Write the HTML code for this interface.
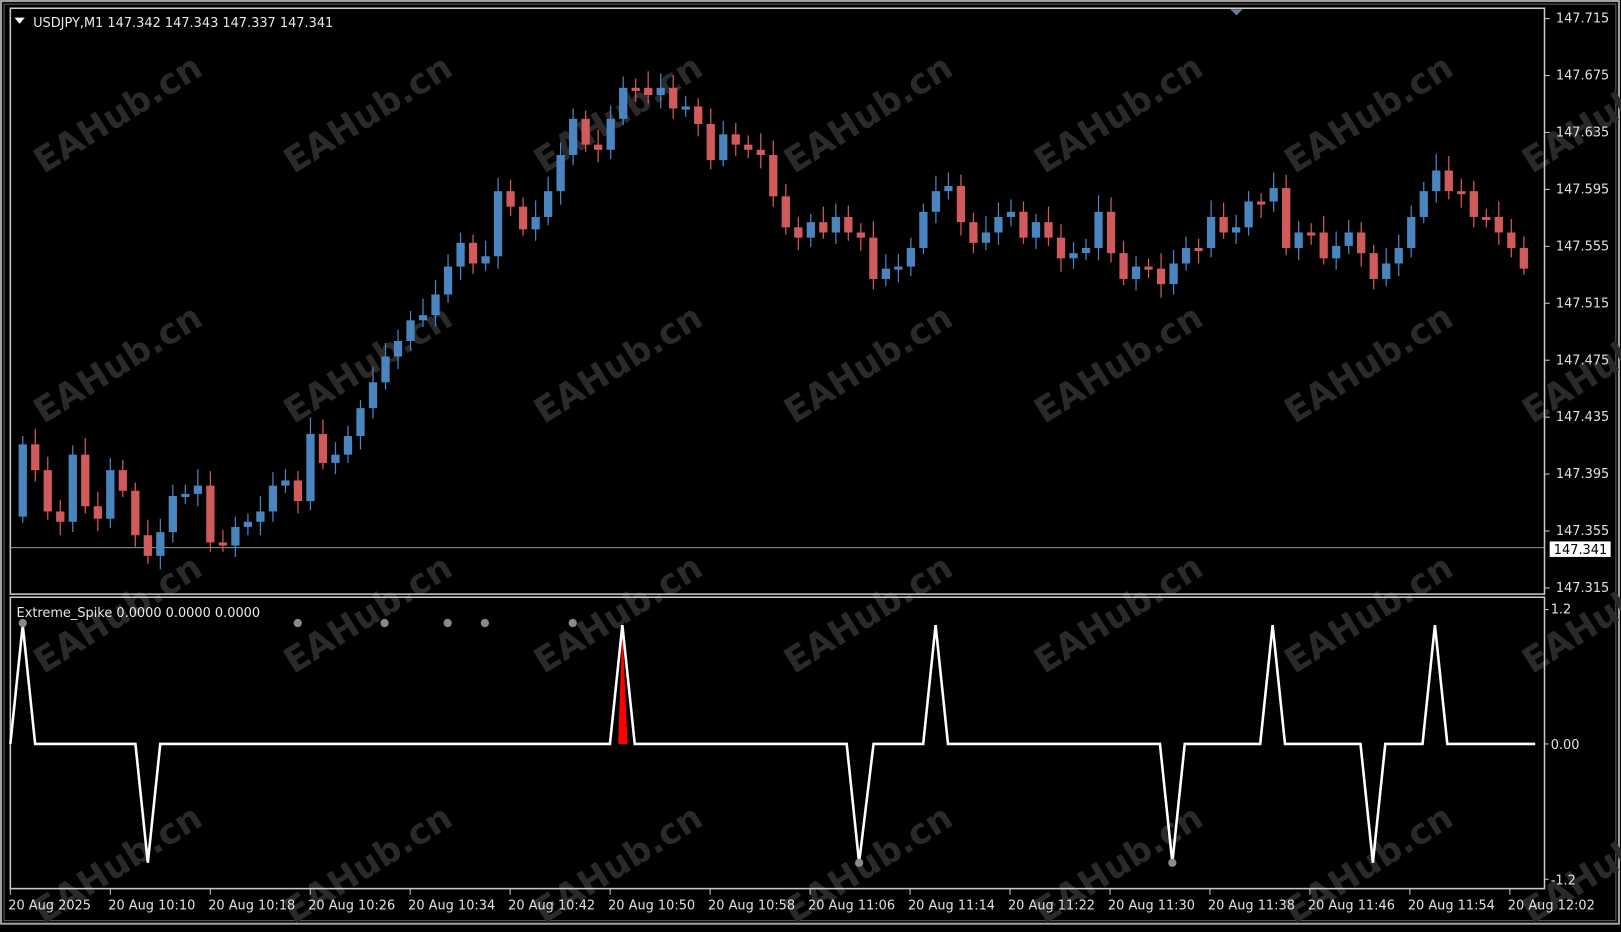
<!DOCTYPE html>
<html><head><meta charset="utf-8"><style>
html,body{margin:0;padding:0;background:#000;width:1621px;height:932px;overflow:hidden}
svg{display:block}
text{font-family:"DejaVu Sans","Liberation Sans",sans-serif}
</style></head><body>
<svg id="s" width="1621" height="932" viewBox="0 0 1568 902" preserveAspectRatio="none" xmlns="http://www.w3.org/2000/svg">
<rect x="0" y="0" width="1568" height="902" fill="#000"/>
<rect x="1" y="1" width="1565" height="893" fill="none" stroke="#a0a0a0" stroke-width="2"/>
<rect x="4" y="4" width="1559" height="887" fill="none" stroke="#606060" stroke-width="1"/>
<g id="wm" fill="#2a2a2a" font-size="34" font-weight="bold"></g>
<rect x="10" y="8" width="1484" height="567" fill="none" stroke="#c8c8c8" stroke-width="1.5"/>
<rect x="10" y="578" width="1484" height="282" fill="none" stroke="#c8c8c8" stroke-width="1.5"/>
<polygon points="1190,9 1202,9 1196,15" fill="#6a7a90"/>
<line x1="10" y1="530" x2="1494" y2="530" stroke="#8a9aa8" stroke-width="1"/>
<g id="c"></g>
<g id="pa" fill="#e0e0e0" font-size="12.5"></g>
<rect x="1499" y="524" width="59" height="15" fill="#fff"/>
<text x="1503" y="536" font-size="12.5" fill="#000">147.341</text>
<polygon points="14,17 24,17 19,23" fill="#fff"/>
<text x="32" y="26" fill="#e8e8e8" font-size="12.5">USDJPY,M1  147.342 147.343 147.337 147.341</text>
<text x="16" y="597" fill="#e8e8e8" font-size="12.5">Extreme_Spike 0.0000 0.0000 0.0000</text>
<polygon points="598,720 602,605 607,720" fill="#ff0000"/>
<polyline fill="none" stroke="#fff" stroke-width="2.5" stroke-linejoin="miter" points="10,720 22,605 34,720 131,720 143,835 155,720 590,720 602,605 614,720 819,720 831,835 845,720 893,720 905,605 917,720 1122,720 1134,835 1146,720 1219,720 1231,605 1243,720 1316,720 1328,835 1340,720 1376,720 1388,605 1400,720 1485,720"/>
<g fill="#8a8a8a"><circle cx="22" cy="603" r="4"/><circle cx="288" cy="603" r="4"/><circle cx="372" cy="603" r="4"/><circle cx="433" cy="603" r="4"/><circle cx="469" cy="603" r="4"/><circle cx="554" cy="603" r="4"/><circle cx="831" cy="835" r="4"/><circle cx="1134" cy="835" r="4"/></g>
<g fill="#e0e0e0" font-size="12.5"><text x="1500" y="594">1.2</text><text x="1500" y="725">0.00</text><text x="1500" y="856">-1.2</text></g>
<g stroke="#c8c8c8"><line x1="1494" y1="590" x2="1498" y2="590"/><line x1="1494" y1="720" x2="1498" y2="720"/><line x1="1494" y1="851" x2="1498" y2="851"/></g>
<g id="ta" fill="#e0e0e0" font-size="12.5"></g>
</svg>
<script>
var NS="http://www.w3.org/2000/svg",c=document.getElementById('c');
function el(t,a,p){var e=document.createElementNS(NS,t);for(var k in a)e.setAttribute(k,a[k]);p.appendChild(e);return e;}
var cl=[430,455,495,505,440,490,502,455,475,518,538,515,480,478,470,525,528,510,505,495,470,465,485,420,448,440,422,395,370,345,330,310,305,285,258,235,255,248,185,200,222,210,185,150,115,140,145,115,85,85,92,85,105,103,120,155,130,140,145,150,190,220,230,215,225,210,225,230,270,260,258,240,205,185,180,215,235,225,210,205,230,215,230,250,245,240,205,245,270,258,260,275,255,240,240,210,225,220,195,195,182,240,225,225,250,238,225,245,270,255,240,210,185,165,185,185,210,210,225,240,260];
var prev=500;
for(var i=0;i<cl.length;i++){var x=22+12.1*i,o=prev,cc=cl[i];var up=cc<o;var col=up?'#4a85c0':'#d05a5c';
var t=Math.min(o,cc),b=Math.max(o,cc);if(b-t<3){b=t+3;}
el('line',{x1:x,y1:t-8-(i*7%9),x2:x,y2:b+6+(i*5%8),stroke:col,'stroke-width':1.2},c);
el('rect',{x:x-4,y:t,width:8,height:b-t,fill:col},c);prev=cc;}
var pa=document.getElementById('pa');
for(var j=0;j<11;j++){var y=18+j*55.1;var t=el('text',{x:1505,y:y+4},pa);t.textContent=(147.715-j*0.04).toFixed(3);
el('line',{x1:1494,y1:y,x2:1499,y2:y,stroke:'#c8c8c8'},pa);}
var labs=['20 Aug 2025','20 Aug 10:10','20 Aug 10:18','20 Aug 10:26','20 Aug 10:34','20 Aug 10:42','20 Aug 10:50','20 Aug 10:58','20 Aug 11:06','20 Aug 11:14','20 Aug 11:22','20 Aug 11:30','20 Aug 11:38','20 Aug 11:46','20 Aug 11:54','20 Aug 12:02'];
var ta=document.getElementById('ta');
for(var k=0;k<labs.length;k++){var x=8+96.7*k;var t=el('text',{x:x,y:880},ta);t.textContent=labs[k];
el('line',{x1:x+2,y1:860,x2:x+2,y2:866,stroke:'#c8c8c8'},ta);}
var wm=document.getElementById('wm');
var xs=[120,362,604,846,1088,1330,1560],ys=[120,362,604,846];
for(var a=0;a<xs.length;a++)for(var b=0;b<ys.length;b++){var t=el('text',{x:xs[a],y:ys[b],'text-anchor':'middle',transform:'rotate(-32 '+xs[a]+' '+ys[b]+')'},wm);t.textContent='EAHub.cn';}
</script>
</body></html>
